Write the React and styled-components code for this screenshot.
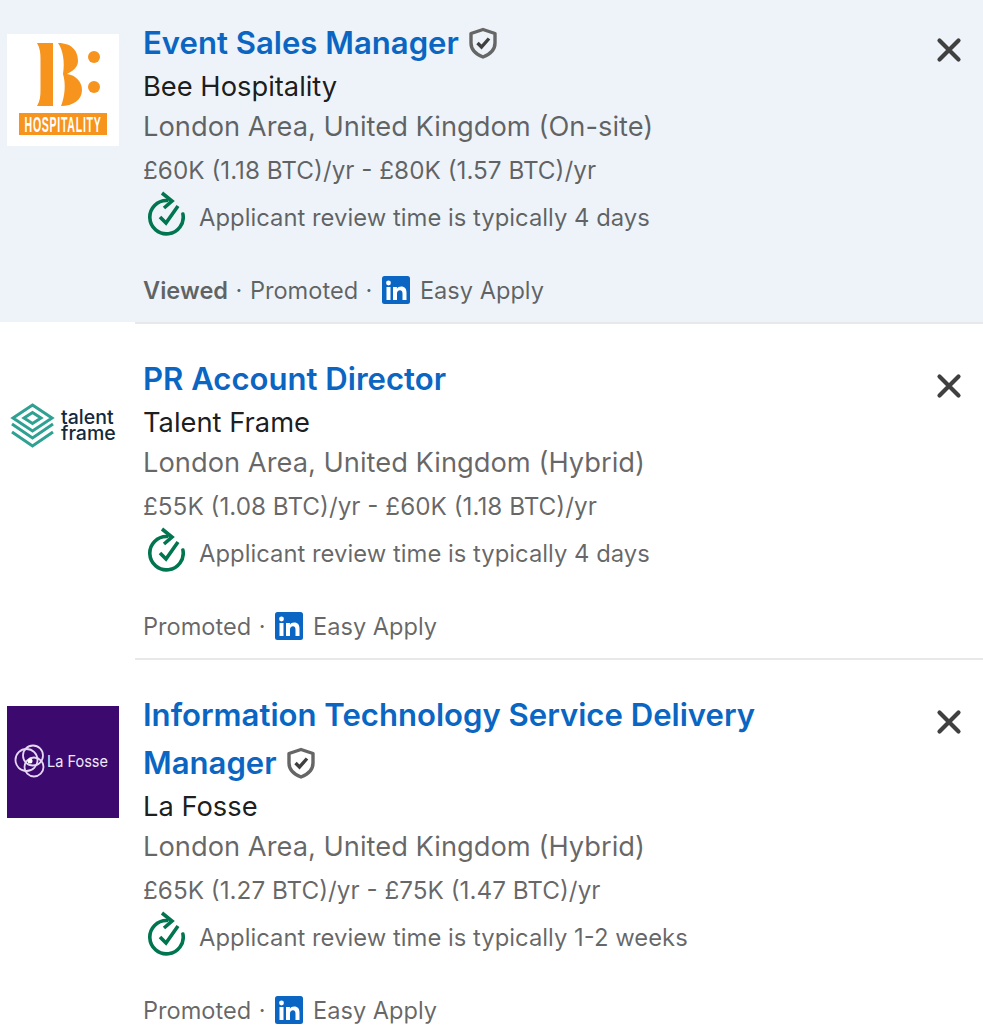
import React from 'react';
import styled, { createGlobalStyle } from 'styled-components';

const GlobalStyle = createGlobalStyle`
  html, body {
    margin: 0;
    padding: 0;
    background: #fff;
    overflow: hidden;
  }
  body {
    font-family: Inter, "Liberation Sans", sans-serif;
    -webkit-font-smoothing: antialiased;
  }
`;

const List = styled.ul`
  list-style: none;
  margin: 0;
  padding: 0;
  width: 983px;
`;

const Row = styled.li`
  display: flex;
  padding-left: 7px;
  background: ${(p) => (p.$active ? '#edf3f8' : '#fff')};
`;

const LogoBox = styled.div`
  flex: none;
  width: 112px;
  height: 112px;
  margin: ${(p) => (p.$first ? '34px' : '48px')} 16px 0 0;
  display: flex;
`;

const Body = styled.div`
  flex: 1;
  display: flex;
  justify-content: space-between;
  padding: ${(p) => (p.$first ? '19px' : '31px')} 14px 12px 8px;
  border-top: ${(p) => (p.$first ? 'none' : '2px solid #e8e8e8')};
  min-width: 0;
`;

const Content = styled.div`
  width: 641px;
`;

const Title = styled.a`
  display: block;
  font-size: 31.1px;
  line-height: 48px;
  font-weight: 600;
  color: #0a66c2;
  text-decoration: none;
`;

const VerifiedIcon = styled.svg`
  width: 30px;
  height: 32px;
  margin-left: 9px;
  vertical-align: -5px;
`;

const Company = styled.div`
  font-size: 27.3px;
  line-height: 40px;
  color: rgba(0, 0, 0, 0.9);
`;

const Location = styled.div`
  font-size: 27.3px;
  line-height: 40px;
  color: rgba(0, 0, 0, 0.6);
`;

const Salary = styled.div`
  font-size: 24.3px;
  line-height: 40px;
  margin-top: 3px;
  color: rgba(0, 0, 0, 0.6);
`;

const Insight = styled.div`
  display: flex;
  align-items: center;
  gap: 14px;
  height: 40px;
  margin-top: 7px;
  font-size: 23.85px;
  color: rgba(0, 0, 0, 0.6);
`;

const ReviewSvg = styled.svg`
  flex: none;
  width: 38px;
  height: 46px;
  margin: 0 0 6px 4px;
`;

const Footer = styled.div`
  display: flex;
  align-items: center;
  height: 40px;
  margin-top: 33px;
  font-size: 23.6px;
  color: rgba(0, 0, 0, 0.6);
`;

const Viewed = styled.strong`
  font-weight: 600;
`;

const Dot = styled.span`
  margin: 0 7.5px;
`;

const InIcon = styled.svg`
  width: 28px;
  height: 28px;
  margin: 0 10px 0 2px;
`;

const CloseButton = styled.button`
  flex: none;
  width: 40px;
  height: 40px;
  margin-top: 11px;
  padding: 0;
  border: none;
  background: none;
  display: flex;
  align-items: center;
  justify-content: center;
`;

const Verified = () => (
  <VerifiedIcon viewBox="0 0 30 32" aria-hidden="true">
    <path d="M15 2.500 L27 6.500 V16 C27 23 21.500 27.500 15 30 C8.500 27.500 3 23 3 16 V6.500 Z" fill="none" stroke="#666" strokeWidth="3.400" strokeLinejoin="round" />
    <path d="M9.500 16 L13.500 20 L21 11.500" fill="none" stroke="#404040" strokeWidth="3.400" />
  </VerifiedIcon>
);

const ReviewIcon = () => (
  <ReviewSvg viewBox="0 0 38 46" aria-hidden="true">
    <path d="M20 9.500 A16.700 16.700 0 1 0 35.900 23" fill="none" stroke="#01754f" strokeWidth="3.600" strokeLinecap="round" />
    <path d="M15 2 L25 10 L17 17" fill="none" stroke="#01754f" strokeWidth="3.600" />
    <path d="M13 26 L19 32 L31 15" fill="none" stroke="#01754f" strokeWidth="3.600" />
  </ReviewSvg>
);

const LinkedInBadge = () => (
  <InIcon viewBox="0 0 28 28" aria-hidden="true">
    <rect width="28" height="28" rx="2.500" fill="#0a66c2" />
    <circle cx="6.500" cy="7" r="2.400" fill="#fff" />
    <rect x="4.500" y="11" width="4" height="13" fill="#fff" />
    <path d="M11 11h3.900v1.800c.8-1.300 2.300-2.200 4.300-2.200 3.600 0 5.300 2.200 5.300 6V24h-4v-6.500c0-2-.7-3.300-2.500-3.300-1.900 0-3 1.300-3 3.400V24h-4z" fill="#fff" />
  </InIcon>
);

const CloseIcon = () => (
  <svg width="28" height="28" viewBox="0 0 28 28" aria-hidden="true">
    <path d="M4.500 4.500 L23.500 23.500 M23.500 4.500 L4.500 23.500" stroke="#404040" strokeWidth="4.200" strokeLinecap="round" />
  </svg>
);

const BeeLogo = () => (
  <svg width="112" height="112" viewBox="0 0 112 112" aria-label="Bee Hospitality">
    <rect width="112" height="112" fill="#fff" />
    <path d="M30 9 H46 V72 H30 C33 67 33.500 62 33.500 56 V25 C33.500 19 33 14 30 9 Z" fill="#f7941d" />
    <path d="M51 9 C66 9 71 18 71 27 C71 33 66 37 60 40 C69 41 75 48 75 56 C75 66 66 72 54 72 C58 62 59 50 56 40 C58 28 56 16 51 9 Z" fill="#f7941d" />
    <circle cx="87" cy="23" r="6" fill="#f7941d" />
    <circle cx="87" cy="53" r="6" fill="#f7941d" />
    <rect x="12" y="79" width="88" height="22" fill="#f7941d" />
    <text transform="translate(56 98) scale(0.48 1)" textAnchor="middle" fontFamily="Liberation Sans, sans-serif" fontSize="22" fontWeight="700" letterSpacing="1.500" fill="#fff">HOSPITALITY</text>
  </svg>
);

const TalentLogo = () => (
  <svg width="112" height="112" viewBox="0 0 112 112" aria-label="Talent Frame">
    <rect width="112" height="112" fill="#fff" />
    <g fill="none" stroke="#2fa192" strokeWidth="3">
      <path d="M25.500 35 L45 48 L25.500 61 L6 48 Z" />
      <path d="M25.500 42.500 L34 48 L25.500 53.500 L17 48 Z" />
      <path d="M5 54 L25.500 68 L46 54" />
      <path d="M5 62 L25.500 76 L46 62" />
    </g>
    <text x="54" y="54" fontFamily="Inter, sans-serif" fontSize="19.500" fontWeight="500" fill="#14283c">talent</text>
    <text x="54" y="69.500" fontFamily="Inter, sans-serif" fontSize="19.500" fontWeight="500" fill="#14283c">frame</text>
  </svg>
);

const FosseLogo = () => (
  <svg width="112" height="112" viewBox="0 0 112 112" aria-label="La Fosse">
    <rect width="112" height="112" fill="#3c0a6e" />
    <g fill="none" stroke="#e6d7f2" strokeWidth="1.800">
      <circle cx="19.500" cy="54" r="11" />
      <circle cx="26" cy="49.500" r="10" />
      <circle cx="27" cy="61" r="9.500" />
    </g>
    <circle cx="23" cy="55" r="2.500" fill="#fff" />
    <text x="40" y="60.500" textLength="61" lengthAdjust="spacingAndGlyphs" fontFamily="Inter, sans-serif" fontSize="16.500" fill="#f0e8f6">La Fosse</text>
  </svg>
);

const JobCard = ({ job, first }) => (
  <Row $active={job.active}>
    <LogoBox $first={first}>{job.logo}</LogoBox>
    <Body $first={first}>
      <Content>
        <Title href="#">
          {job.title}
          {job.verified && <Verified />}
        </Title>
        <Company>{job.company}</Company>
        <Location>{job.location}</Location>
        <Salary>{job.salary}</Salary>
        <Insight>
          <ReviewIcon />
          {job.review}
        </Insight>
        <Footer>
          {job.active && (
            <>
              <Viewed>Viewed</Viewed>
              <Dot>·</Dot>
            </>
          )}
          Promoted
          <Dot>·</Dot>
          <LinkedInBadge />
          Easy Apply
        </Footer>
      </Content>
      <CloseButton aria-label="Dismiss">
        <CloseIcon />
      </CloseButton>
    </Body>
  </Row>
);

const jobs = [
  {
    title: 'Event Sales Manager',
    verified: true,
    active: true,
    company: 'Bee Hospitality',
    location: 'London Area, United Kingdom (On-site)',
    salary: '£60K (1.18 BTC)/yr - £80K (1.57 BTC)/yr',
    review: 'Applicant review time is typically 4 days',
    logo: <BeeLogo />,
  },
  {
    title: 'PR Account Director',
    company: 'Talent Frame',
    location: 'London Area, United Kingdom (Hybrid)',
    salary: '£55K (1.08 BTC)/yr - £60K (1.18 BTC)/yr',
    review: 'Applicant review time is typically 4 days',
    logo: <TalentLogo />,
  },
  {
    title: 'Information Technology Service Delivery Manager',
    verified: true,
    company: 'La Fosse',
    location: 'London Area, United Kingdom (Hybrid)',
    salary: '£65K (1.27 BTC)/yr - £75K (1.47 BTC)/yr',
    review: 'Applicant review time is typically 1-2 weeks',
    logo: <FosseLogo />,
  },
];

export default function App() {
  return (
    <>
      <GlobalStyle />
      <List>
        {jobs.map((job, i) => (
          <JobCard key={job.title} job={job} first={i === 0} />
        ))}
      </List>
    </>
  );
}
